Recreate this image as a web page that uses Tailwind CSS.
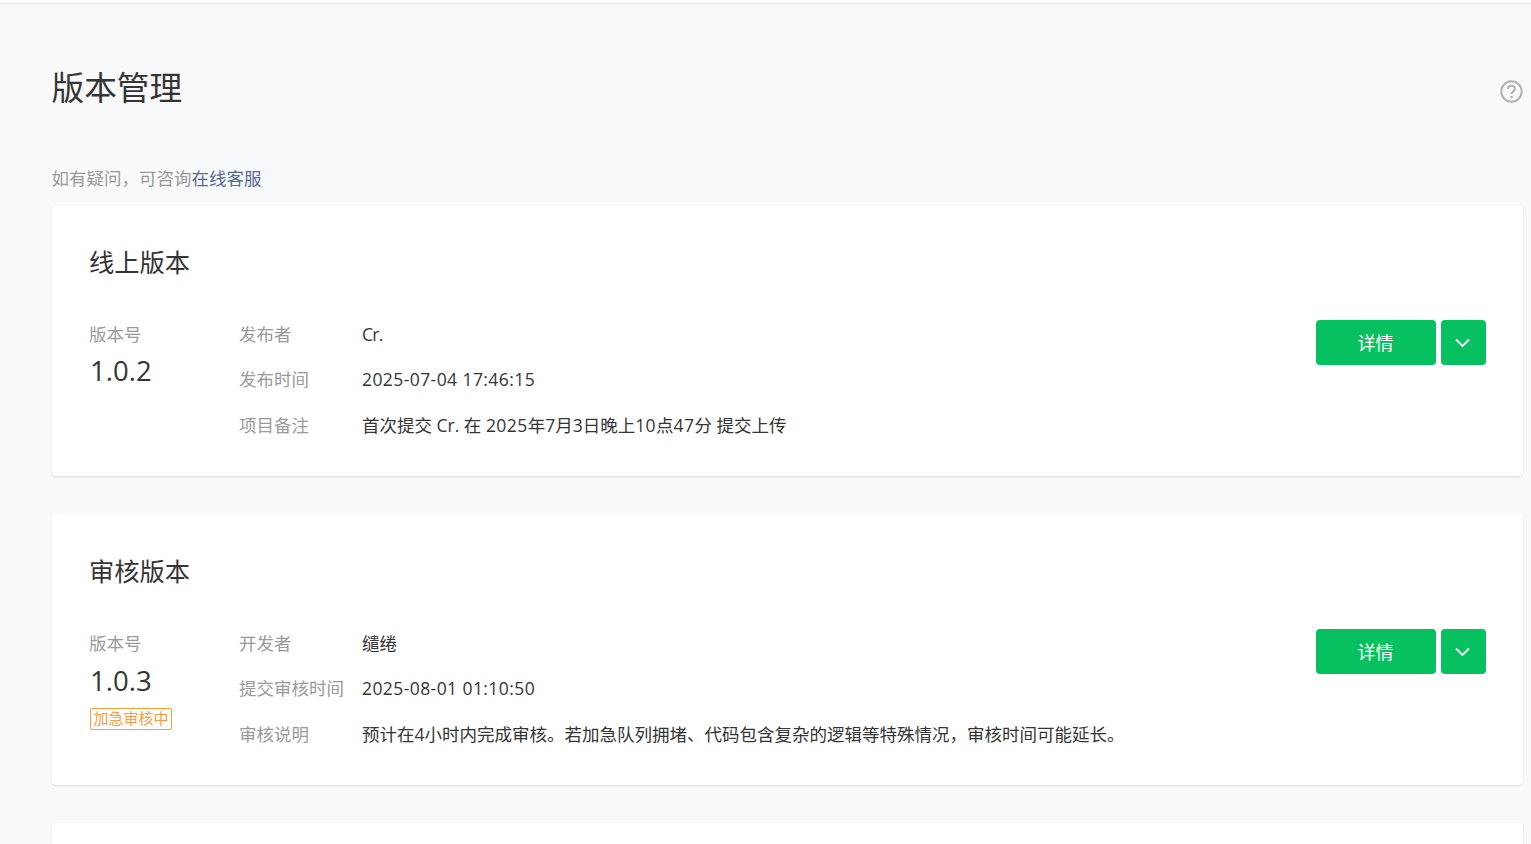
<!DOCTYPE html>
<html lang="zh-CN">
<head>
<meta charset="utf-8">
<script src="https://cdn.jsdelivr.net/npm/@tailwindcss/browser@4"></script>
</head>
<body class="h-[844px] overflow-hidden bg-[#f8f9fb] font-['Open_Sans','Noto_Sans_CJK_SC',sans-serif] text-[17.5px] text-[#353535]">
<div class="h-[4px] border-b border-[#e5e5e5] bg-white"></div>
<main class="pl-[52px] pr-[8px]">
  <div class="flex h-[150px] items-start justify-between pt-[59px]">
    <h1 class="-ml-[0.5px] text-[32.700px] leading-[50px]">版本管理</h1>
    <svg class="mt-[17px]" width="23" height="23" viewBox="0 0 23 23" fill="none"><circle cx="11.5" cy="11.5" r="10.2" stroke="#b2b2b2" stroke-width="2"/><path d="M8 9c0-2 1.500-3.200 3.500-3.200S15 7 15 8.800c0 2.500-3.500 2.700-3.500 5.200" stroke="#b2b2b2" stroke-width="2"/><circle cx="11.500" cy="17" r="1.300" fill="#b2b2b2"/></svg>
  </div>
  <p class="-ml-[0.5px] h-[52px] pt-[11px] leading-[26px] text-[#9a9a9a]">如有疑问，可咨询<a class="text-[#576b95]">在线客服</a></p>
  <section class="mb-[38px] h-[270px] rounded-[4px] bg-white pl-[37px] pr-[37px] shadow-[0_1px_2px_rgba(0,0,0,0.12)]">
    <h2 class="pt-[37px] text-[25.250px] leading-[38px]">线上版本</h2>
    <div class="mt-[38px] flex items-start">
      <div class="w-[150px] shrink-0 -mt-[7px]">
        <div class="leading-[45px] text-[#9a9a9a]">版本号</div>
        <div class="mt-[-1px] pl-[1px] text-[27.500px] leading-[30px]">1.0.2</div>
      </div>
      <div class="grid flex-1 grid-cols-[123px_1fr] auto-rows-[45.250px] -mt-[7px] leading-[45px]">
        <div class="text-[#9a9a9a]">发布者</div><div class="tracking-[-0.7px]">Cr.</div>
        <div class="text-[#9a9a9a]">发布时间</div><div class="tracking-[0.42px]">2025-07-04 17:46:15</div>
        <div class="text-[#9a9a9a]">项目备注</div><div>首次提交 Cr. 在 <span class="tracking-[0.42px]">2025</span>年7月3日晚上<span class="tracking-[0.42px]">10</span>点<span class="tracking-[0.42px]">47</span>分 提交上传</div>
      </div>
      <div class="flex gap-[5px] mt-[1px]">
        <button class="flex h-[45px] w-[120px] items-center justify-center rounded-[4px] bg-[#07c160] pr-[1px] pt-[1px] text-[18px] text-white">详情</button>
        <button class="flex h-[45px] w-[45px] items-center justify-center rounded-[4px] bg-[#07c160] pr-[2px]"><svg width="15" height="10" viewBox="0 0 15 10" fill="none"><path d="M1 1.500l6.500 6.500 6.500-6.500" stroke="#fff" stroke-width="1.800"/></svg></button>
      </div>
    </div>
  </section>
  <section class="mb-[38px] h-[271px] rounded-[4px] bg-white pl-[37px] pr-[37px] shadow-[0_1px_2px_rgba(0,0,0,0.12)]">
    <h2 class="pt-[38px] text-[25.250px] leading-[38px]">审核版本</h2>
    <div class="mt-[38px] flex items-start">
      <div class="w-[150px] shrink-0 -mt-[7px]">
        <div class="leading-[45px] text-[#9a9a9a]">版本号</div>
        <div class="pl-[1px] text-[27.500px] leading-[30px]">1.0.3</div>
        <span class="mt-[12px] ml-[1px] inline-block h-[22px] rounded-[2px] border border-[#fa9d3b] px-[2.500px] text-[15px] leading-[19px] text-[#fa9d3b]">加急审核中</span>
      </div>
      <div class="grid flex-1 grid-cols-[123px_1fr] auto-rows-[45.250px] -mt-[7px] leading-[45px]">
        <div class="text-[#9a9a9a]">开发者</div><div>缱绻</div>
        <div class="whitespace-nowrap text-[#9a9a9a]">提交审核时间</div><div class="tracking-[0.42px]">2025-08-01 01:10:50</div>
        <div class="text-[#9a9a9a]">审核说明</div><div>预计在4小时内完成审核。若加急队列拥堵、代码包含复杂的逻辑等特殊情况，审核时间可能延长。</div>
      </div>
      <div class="flex gap-[5px] mt-[1px]">
        <button class="flex h-[45px] w-[120px] items-center justify-center rounded-[4px] bg-[#07c160] pr-[1px] pt-[1px] text-[18px] text-white">详情</button>
        <button class="flex h-[45px] w-[45px] items-center justify-center rounded-[4px] bg-[#07c160] pr-[2px]"><svg width="15" height="10" viewBox="0 0 15 10" fill="none"><path d="M1 1.500l6.500 6.500 6.500-6.500" stroke="#fff" stroke-width="1.800"/></svg></button>
      </div>
    </div>
  </section>
  <section class="h-[270px] rounded-[4px] bg-white shadow-[0_1px_2px_rgba(0,0,0,0.12)]"></section>
</main>
</body>
</html>
